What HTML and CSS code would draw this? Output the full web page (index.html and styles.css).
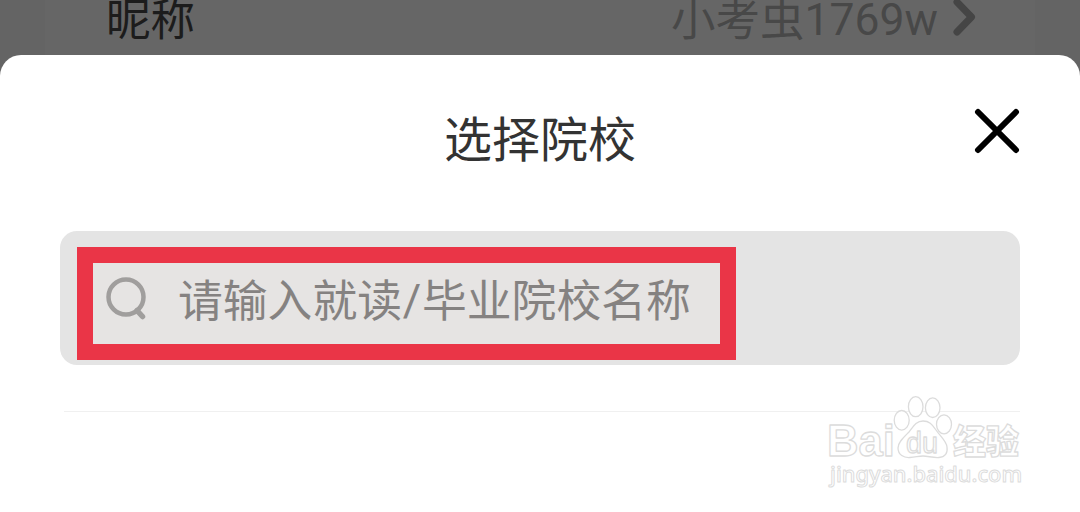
FILE: index.html
```html
<!DOCTYPE html>
<html lang="zh-CN">
<head>
<meta charset="utf-8">
<title>选择院校</title>
<link rel="stylesheet" href="styles.css">
</head>
<body>
<div class="screen">
  <div class="profile-row">
    <span class="profile-label">昵称</span>
    <span class="profile-value">小考虫<span class="latin">1769w</span></span>
    <svg class="chevron" viewBox="0 0 24 40" aria-hidden="true"><path d="M4 4 L18.500 19 L4 34"/></svg>
  </div>
  <main class="sheet">
    <header class="sheet-header">
      <h1 class="title">选择院校</h1>
      <button class="close" aria-label="关闭"><svg viewBox="0 0 46 46"><path d="M4 4 L42 42 M42 4 L4 42"/></svg></button>
    </header>
    <div class="search">
      <div class="highlight">
        <svg class="search-icon" viewBox="0 0 44 48" aria-hidden="true"><circle cx="20" cy="22" r="17.500"/><path d="M31 35.500 L36.500 41.500"/></svg>
        <span class="placeholder">请输入就读<span class="slash">/</span>毕业院校名称</span>
      </div>
    </div>
    <div class="divider"></div>
    <svg class="watermark" viewBox="0 0 210 120">
      <g class="mark">
        <text class="brand" x="6" y="75" textLength="68" lengthAdjust="spacingAndGlyphs">Bai</text>
        <ellipse cx="80.700" cy="39.300" rx="7.500" ry="9.800"/>
        <ellipse cx="94.700" cy="25.700" rx="7.300" ry="10"/>
        <ellipse cx="111.700" cy="26.700" rx="7.300" ry="9.800"/>
        <ellipse cx="123" cy="43.300" rx="7.500" ry="9.500"/>
        <path d="M102 40 C95 40 92 46 88 51 C83 56 77 61 77 67 C77 74 83 77 89 76.500 C95 76 98 75 102 75 C107 75 112 77 118 76.500 C124 76 127 72 126 66 C125.500 60 119 55 115 49 C111 43 108 40 102 40 Z"/>
        <text class="du" x="85" y="71.500" textLength="32" lengthAdjust="spacingAndGlyphs">du</text>
        <text class="cjk" x="132" y="73" textLength="66" lengthAdjust="spacingAndGlyphs">经验</text>
        <text class="url" x="9" y="101" textLength="192" lengthAdjust="spacingAndGlyphs">jingyan.baidu.com</text>
      </g>
    </svg>
  </main>
</div>
</body>
</html>
```
FILE: styles.css
```css
* { box-sizing: border-box; }
body { margin: 0; font-family: "Noto Sans CJK SC", sans-serif; }
.screen { position: relative; width: 1080px; height: 512px; overflow: hidden; background: #646464; }
.profile-row { display: flex; align-items: center; height: 55px; margin: 0 45px; padding: 0 58px 0 61px; background: #666; font-size: 44.5px; line-height: 64px; }
.profile-label { margin-top: -21px; color: #1c1c1c; }
.profile-value { margin: -22px 15px 0 auto; color: #484848; white-space: nowrap; }
.latin { display: inline-block; font-family: Roboto, sans-serif; font-size: 44.5px; line-height: 40px; transform: translateY(-1px); }
.chevron { width: 24px; height: 40px; margin-top: -20px; }
.chevron path { fill: none; stroke: #454545; stroke-width: 7; stroke-linecap: round; stroke-linejoin: round; }
.sheet { height: 457px; padding: 0 60px; background: #fff; border-radius: 21px 21px 0 0; }
.sheet-header { display: grid; grid-template-columns: 46px 1fr 46px; height: 176px; }
.title { grid-column: 2; margin: 46px 0 0; font-size: 48px; font-weight: 400; line-height: 70px; color: #333; text-align: center; }
.close { width: 46px; height: 46px; margin: 53px 0 0; padding: 0; border: 0; background: none; }
.close svg { display: block; width: 46px; height: 46px; }
.close path { fill: none; stroke: #000; stroke-width: 6; stroke-linecap: round; }
.search { height: 134px; padding: 16px 17px; background: #e4e4e4; border-radius: 17px; }
.highlight { display: flex; align-items: center; width: 659px; height: 113px; padding-left: 13px; border: 16px solid #ea3547; background: #e6e4e3; }
.search-icon { width: 44px; height: 48px; margin-top: -10px; }
.search-icon circle, .search-icon path { fill: none; stroke: #a09e9d; stroke-width: 4.5; }
.search-icon path { stroke-width: 5.5; stroke-linecap: round; }
.placeholder { margin: -12px 0 0 28px; font-size: 44.8px; line-height: 64px; color: #858281; white-space: nowrap; }
.slash { display: inline-block; width: 20px; font-family: Roboto, sans-serif; line-height: 40px; text-align: center; transform: translateY(-1px); }
.divider { height: 1px; margin: 46px 0 0 4px; background: #f0f0f0; }
.watermark { position: absolute; left: 821px; top: 381px; width: 210px; height: 120px; }
.mark { fill: #fff; stroke: #dcdcdc; stroke-width: 1.3; stroke-linejoin: round; }
.brand { font: 700 45px "Liberation Sans", sans-serif; }
.du { font: 400 29px "Liberation Sans", sans-serif; }
.cjk { font: 900 34px "Noto Sans CJK SC", sans-serif; }
.url { font: 500 22px "Noto Sans", sans-serif; stroke-width: 1; }
```
